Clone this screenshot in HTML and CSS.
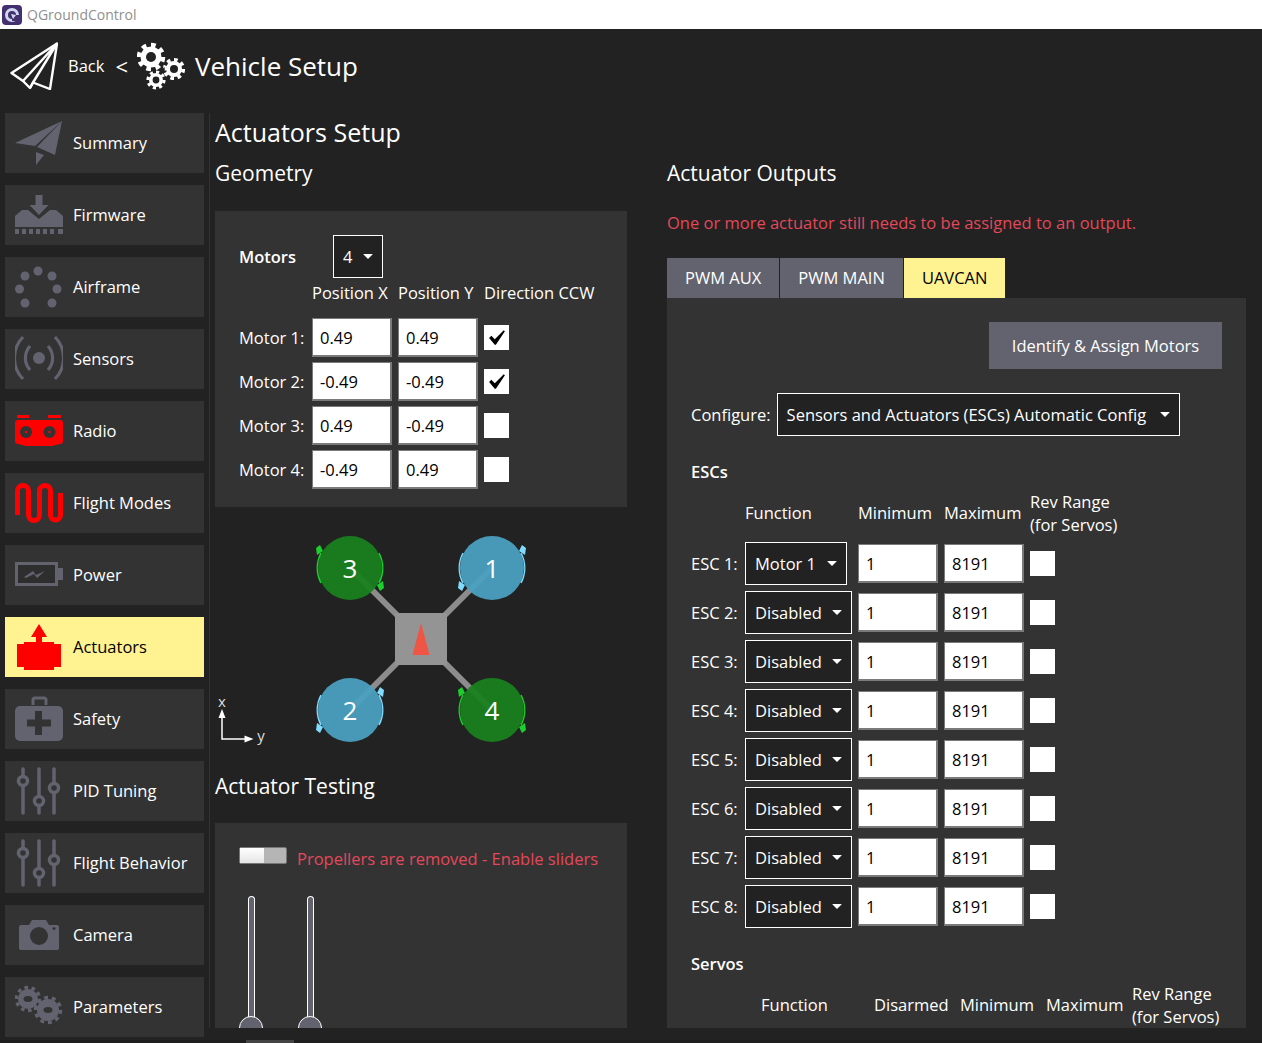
FILE: index.html
```html
<!DOCTYPE html>
<html>
<head>
<meta charset="utf-8">
<title>QGroundControl</title>
<link rel="stylesheet" href="styles.css">
</head>
<body>
<div class="titlebar">
  <svg class="app-logo" viewBox="0 0 20 20"><rect width="20" height="20" rx="4" fill="#43306f"/><circle cx="10" cy="10" r="5.5" fill="none" stroke="#cfd8ee" stroke-width="3"/><path d="M10 10h7v6h-7z" fill="#43306f"/><path d="M9 9l5 1-3 4z" fill="#cfd8ee"/></svg>
  <span>QGroundControl</span>
</div>

<div class="header">
  <svg class="back-plane" viewBox="0 0 48 48" fill="none" stroke="#fff" stroke-width="2.4" stroke-linejoin="round"><path d="M47 1.5L1.5 31 13 39l7 7 3-5.5L40 47z"/><path d="M47 1.5L13 39M47 1.5L23 40.5M20 46l3-5.5"/></svg>
  <span class="back-label">Back</span>
  <span class="back-arrow">&lt;</span>
  <svg class="header-gears" viewBox="0 0 48 48">
    <circle cx="14" cy="15" r="10.5" fill="#fff"/><circle cx="14" cy="15" r="12" fill="none" stroke="#fff" stroke-width="4.5" pathLength="16" stroke-dasharray="1 1"/><circle cx="14" cy="15" r="5" fill="#222"/>
    <circle cx="37" cy="27" r="8" fill="#fff"/><circle cx="37" cy="27" r="9.3" fill="none" stroke="#fff" stroke-width="3.6" pathLength="16" stroke-dasharray="1 1"/><circle cx="37" cy="27" r="4" fill="#222"/>
    <circle cx="19" cy="38" r="7" fill="#fff"/><circle cx="19" cy="38" r="8" fill="none" stroke="#fff" stroke-width="3.2" pathLength="16" stroke-dasharray="1 1"/><circle cx="19" cy="38" r="3.4" fill="#222"/>
  </svg>
  <span class="header-title">Vehicle Setup</span>
</div>

<div class="main">
  <div class="sidebar">
    <div class="navbtn">
      <svg class="navicon" viewBox="0 0 48 48" fill="#636370"><path d="M47 2L0 24l20 3z"/><path d="M47 2L22 28l18 8z"/><path d="M21 33v13l8-10z"/></svg>
      Summary
    </div>
    <div class="navbtn">
      <svg class="navicon" viewBox="0 0 48 48" fill="#636370"><path d="M0 25l7-6h6l11 9 11-9h6l7 6v11H0z"/><path d="M20.500 4h7v10h6L24 24l-9.500-10h6z"/><path d="M0 38h4v5H0zM7 38h4v5H7zM14 38h4v5h-4zM21 38h4v5h-4zM28 38h4v5h-4zM35 38h4v5h-4zM43 38h5v5h-5z"/></svg>
      Firmware
    </div>
    <div class="navbtn">
      <svg class="navicon" viewBox="0 0 48 48" fill="#636370"><circle cx="23" cy="8" r="4.500"/><circle cx="37" cy="13" r="4.500"/><circle cx="42" cy="26" r="4.500"/><circle cx="37" cy="40" r="4.500"/><circle cx="10" cy="40" r="4.500"/><circle cx="4.500" cy="26" r="4.500"/><circle cx="10" cy="13" r="4.500"/></svg>
      Airframe
    </div>
    <div class="navbtn">
      <svg class="navicon" viewBox="0 0 48 48" fill="none" stroke="#636370" stroke-width="3.200"><circle cx="24" cy="23" r="6" fill="#636370" stroke="none"/><path d="M15 11a18 18 0 0 0 0 24M33 11a18 18 0 0 1 0 24M8 2a30 30 0 0 0 0 42M40 2a30 30 0 0 1 0 42"/></svg>
      Sensors
    </div>
    <div class="navbtn">
      <svg class="navicon" viewBox="0 0 48 48" fill="#f00"><path d="M2 8h12v3H2zM33 8h13v3H33z"/><path d="M3 13h42q3 0 3 3v18q0 3-3 3l-8 2H11l-8-2q-3 0-3-3V16q0-3 3-3z"/><circle cx="11" cy="25" r="6" fill="#333"/><circle cx="34.500" cy="25" r="6" fill="#333"/><circle cx="11" cy="25" r="1.200"/><circle cx="34.500" cy="25" r="1.200"/></svg>
      Radio
    </div>
    <div class="navbtn">
      <svg class="navicon" viewBox="0 0 48 48" fill="none" stroke="#f00" stroke-width="5"><path d="M2.500 36V12a5.500 5.500 0 0 1 11 0v24a5.500 5.500 0 0 0 11 0V12a5.500 5.500 0 0 1 11 0v24a5 5 0 0 0 10 0V14"/></svg>
      Flight Modes
    </div>
    <div class="navbtn">
      <svg class="navicon" viewBox="0 0 48 48" fill="#636370"><rect x="1.500" y="12.500" width="40" height="21" fill="#2e2e2e" stroke="#636370" stroke-width="3"/><path d="M43 17h5v12h-5z"/><path d="M9 26l9-6 3 4 9-4-8 7-3-4-8 4z"/></svg>
      Power
    </div>
    <div class="navbtn navbtn-active">
      <svg class="navicon" viewBox="0 0 48 48" fill="#f00"><path d="M24 1l8 13h-5v5h12v2h7v23h-7v3H9v-3H2V21h7v-2h12v-5h-5z"/></svg>
      Actuators
    </div>
    <div class="navbtn">
      <svg class="navicon" viewBox="0 0 48 48" fill="#636370"><path d="M18 10V5q0-2 2-2h9q2 0 2 2v5" fill="none" stroke="#636370" stroke-width="3"/><rect y="11" width="48" height="35" rx="5"/><path d="M20 16h7v8.500h9v7h-9V40h-7v-8.500h-8v-7h8z" fill="#333"/></svg>
      Safety
    </div>
    <div class="navbtn">
      <svg class="navicon" viewBox="0 0 48 48" fill="#333" stroke="#636370" stroke-width="3.500" stroke-linecap="round"><path d="M8 2v44M24 2v44M39 2v44"/><circle cx="8" cy="14" r="4.500"/><circle cx="24" cy="34" r="4.500"/><circle cx="39" cy="21" r="4.500"/></svg>
      PID Tuning
    </div>
    <div class="navbtn">
      <svg class="navicon" viewBox="0 0 48 48" fill="#333" stroke="#636370" stroke-width="3.500" stroke-linecap="round"><path d="M8 2v44M24 2v44M39 2v44"/><circle cx="8" cy="14" r="4.500"/><circle cx="24" cy="34" r="4.500"/><circle cx="39" cy="21" r="4.500"/></svg>
      Flight Behavior
    </div>
    <div class="navbtn">
      <svg class="navicon" viewBox="0 0 48 48" fill="#636370"><path d="M6 14h8l3-5h14l3 5h8q2 0 2 2v21q0 2-2 2H6q-2 0-2-2V16q0-2 2-2z"/><circle cx="24" cy="25" r="9" fill="#333"/><circle cx="39" cy="17.500" r="1.500" fill="#333"/></svg>
      Camera
    </div>
    <div class="navbtn">
      <svg class="navicon" viewBox="0 0 48 48" fill="#636370">
        <circle cx="13" cy="16" r="10"/><circle cx="13" cy="16" r="11.500" fill="none" stroke="#636370" stroke-width="3.500" pathLength="20" stroke-dasharray="1 1"/><ellipse cx="13" cy="16" rx="4.500" ry="3" fill="#333"/>
        <circle cx="33" cy="27" r="11"/><circle cx="33" cy="27" r="12.500" fill="none" stroke="#636370" stroke-width="3.500" pathLength="20" stroke-dasharray="1 1"/><ellipse cx="33" cy="27" rx="4.500" ry="3" fill="#333"/>
      </svg>
      Parameters
    </div>
  </div>
  <div class="divider"></div>

  <div class="content">
    <div class="page-title">Actuators Setup</div>
    <div class="columns">
      <div class="col-left">
        <div class="section-title">Geometry</div>
        <div class="panel geometry">
          <div class="motors-row"><b>Motors</b><div class="combo combo-count">4<i class="caret"></i></div></div>
          <div class="motor-grid">
            <div></div><div class="motor-head">Position X</div><div class="motor-head">Position Y</div><div class="motor-head">Direction CCW</div>
            <div>Motor 1:</div><input class="field" value="0.49"><input class="field" value="0.49"><div class="check"><svg class="tick" viewBox="0 0 16 14"><path d="M1 7l2-2 3 3 8-8 1 1-8 12h-1z"/></svg></div>
            <div>Motor 2:</div><input class="field" value="-0.49"><input class="field" value="-0.49"><div class="check"><svg class="tick" viewBox="0 0 16 14"><path d="M1 7l2-2 3 3 8-8 1 1-8 12h-1z"/></svg></div>
            <div>Motor 3:</div><input class="field" value="0.49"><input class="field" value="-0.49"><div class="check"></div>
            <div>Motor 4:</div><input class="field" value="-0.49"><input class="field" value="0.49"><div class="check"></div>
          </div>
        </div>

        <svg class="diagram" viewBox="210 507 412 261">
          <path d="M345 568L487 710M487 568L345 710" stroke="#8c8c8c" stroke-width="6"/>
          <rect x="390" y="613" width="52" height="52" fill="#949494"/>
          <path d="M416 623l8.500 32h-17z" fill="#ee5544"/>
          <g class="rotor rotor-ccw" transform="translate(345 568)">
            <circle r="32"/><path class="arc" d="M-29-15A32 32 0 0 0-29 15M29-15A32 32 0 0 1 29 15"/><path class="head" d="M-30-23l3 6-6 4-1-7zM30 23l-3-6 6-4 1 7z"/>
            <text y="10">3</text>
          </g>
          <g class="rotor rotor-cw" transform="translate(487 568)">
            <circle r="32"/><path class="arc" d="M-29-15A32 32 0 0 0-29 15M29-15A32 32 0 0 1 29 15"/><path class="head" d="M-30 23l3-6-6-4-1 7zM30-23l-3 6 6 4 1-7z"/>
            <text y="10">1</text>
          </g>
          <g class="rotor rotor-cw" transform="translate(345 710)">
            <circle r="32"/><path class="arc" d="M-29-15A32 32 0 0 0-29 15M29-15A32 32 0 0 1 29 15"/><path class="head" d="M-30 23l3-6-6-4-1 7zM30-23l-3 6 6 4 1-7z"/>
            <text y="10">2</text>
          </g>
          <g class="rotor rotor-ccw" transform="translate(487 710)">
            <circle r="32"/><path class="arc" d="M-29-15A32 32 0 0 0-29 15M29-15A32 32 0 0 1 29 15"/><path class="head" d="M-30-23l3 6-6 4-1-7zM30 23l-3-6 6-4 1 7z"/>
            <text y="10">4</text>
          </g>
          <path d="M217 712v27h24" fill="none" stroke="#fff" stroke-width="1.500"/>
          <path d="M217 709l3.500 9h-7zM248.500 739l-9 3.500v-7z" fill="#fff"/>
          <text class="axis" x="217" y="707">x</text>
          <text class="axis" x="256" y="741">y</text>
        </svg>

        <div class="section-title">Actuator Testing</div>
        <div class="panel testing">
          <div class="enable-row">
            <div class="toggle"><span class="toggle-knob"></span></div>
            <span class="warn">Propellers are removed - Enable sliders</span>
          </div>
          <div class="sliders">
            <div class="slider"><div class="slider-track"></div><div class="slider-knob"></div></div>
            <div class="slider"><div class="slider-track"></div><div class="slider-knob"></div></div>
          </div>
        </div>
      </div>

      <div class="col-right">
        <div class="section-title">Actuator Outputs</div>
        <div class="warn warn-outputs">One or more actuator still needs to be assigned to an output.</div>
        <div class="tabs">
          <div class="tab">PWM AUX</div>
          <div class="tab">PWM MAIN</div>
          <div class="tab tab-active">UAVCAN</div>
        </div>
        <div class="panel outputs">
          <div class="identify-row"><div class="btn">Identify &amp; Assign Motors</div></div>
          <div class="configure-row">Configure:<div class="combo combo-config">Sensors and Actuators (ESCs) Automatic Config<i class="caret"></i></div></div>
          <div class="group-title">ESCs</div>
          <div class="esc-grid">
            <div></div><div>Function</div><div>Minimum</div><div>Maximum</div><div class="rev">Rev Range<br>(for Servos)</div>
            <div>ESC 1:</div><div class="combo combo-fn combo-motor">Motor 1<i class="caret"></i></div><input class="field" value="1"><input class="field" value="8191"><div class="check"></div>
            <div>ESC 2:</div><div class="combo combo-fn">Disabled<i class="caret"></i></div><input class="field" value="1"><input class="field" value="8191"><div class="check"></div>
            <div>ESC 3:</div><div class="combo combo-fn">Disabled<i class="caret"></i></div><input class="field" value="1"><input class="field" value="8191"><div class="check"></div>
            <div>ESC 4:</div><div class="combo combo-fn">Disabled<i class="caret"></i></div><input class="field" value="1"><input class="field" value="8191"><div class="check"></div>
            <div>ESC 5:</div><div class="combo combo-fn">Disabled<i class="caret"></i></div><input class="field" value="1"><input class="field" value="8191"><div class="check"></div>
            <div>ESC 6:</div><div class="combo combo-fn">Disabled<i class="caret"></i></div><input class="field" value="1"><input class="field" value="8191"><div class="check"></div>
            <div>ESC 7:</div><div class="combo combo-fn">Disabled<i class="caret"></i></div><input class="field" value="1"><input class="field" value="8191"><div class="check"></div>
            <div>ESC 8:</div><div class="combo combo-fn">Disabled<i class="caret"></i></div><input class="field" value="1"><input class="field" value="8191"><div class="check"></div>
          </div>
          <div class="group-title group-servos">Servos</div>
          <div class="servo-head">
            <div>Function</div><div>Disarmed</div><div>Minimum</div><div>Maximum</div><div class="rev">Rev Range<br>(for Servos)</div>
          </div>
        </div>
      </div>
    </div>
  </div>
</div>
<div class="scrollbar"><div class="scroll-thumb"></div></div>
</body>
</html>
```

FILE: styles.css
```css
* { margin:0; padding:0; box-sizing:border-box; }
html, body { height:100%; overflow:hidden; }
body { width:1262px; height:1043px; display:flex; flex-direction:column; background:#222222; color:#fff; font:16.5px/22px "Open Sans", "Noto Sans", sans-serif; }

.titlebar { height:29px; flex:none; background:#fff; color:#8f8f8f; display:flex; align-items:center; padding-left:2px; gap:5px; font-size:14px; }
.app-logo { width:20px; height:20px; }

.header { height:84px; flex:none; display:flex; align-items:center; padding-left:10px; padding-bottom:10px; }
.back-plane { width:48px; height:48px; }
.back-label { margin-left:10px; }
.back-arrow { margin-left:11px; font-size:22px; }
.header-gears { width:48px; height:48px; margin-left:9px; }
.header-title { margin-left:10px; font-size:26px; line-height:36px; }

.main { flex:1; display:flex; min-height:0; }
.sidebar { width:199px; margin-left:5px; flex:none; display:flex; flex-direction:column; gap:12px; }
.navbtn { height:60px; flex:none; background:#333333; display:flex; align-items:center; gap:10px; padding-left:10px; }
.navbtn-active { background:#fff291; color:#000; }
.navicon { width:48px; height:48px; flex:none; }
.divider { width:1px; height:915px; margin:0 5px; background:#333333; flex:none; }

.content { width:1031px; flex:none; }
.page-title { height:42px; padding-top:1px; font-size:25px; line-height:36px; }
.columns { display:flex; gap:40px; height:873px; }
.col-left { width:412px; flex:none; }
.col-right { width:579px; flex:none; }
.section-title { height:36px; font-size:21px; line-height:36px; }
.panel { background:#333333; }

.geometry { height:296px; margin-top:20px; padding:24px; }
.motors-row { display:flex; align-items:center; height:43px; }
.motors-row b { width:94px; font-weight:600; }
.motor-grid { display:grid; grid-template-columns:67px 80px 80px auto; grid-template-rows:35px repeat(4, 39px); column-gap:6px; row-gap:5px; align-items:center; margin-bottom:0; }
.motor-grid > .motor-head { white-space:nowrap; margin-bottom:0; align-self:center; }
.motor-grid > div:nth-child(-n+4) { margin-bottom:5px; }

.field { width:80px; height:39px; background:#fff; border:none; border-bottom:2px solid #7a7a7a; border-right:2px solid #7a7a7a; border-left:1px solid #7a7a7a; border-top:1px solid #7a7a7a; padding-left:7px; color:#000; font:16.5px "Open Sans", sans-serif; outline:none; }
.check { width:25px; height:25px; background:#fff; display:flex; align-items:center; justify-content:center; }
.tick { width:18px; height:16px; fill:#000; }

.combo { height:43px; background:#222222; border:1px solid #fff; color:#fff; display:flex; align-items:center; white-space:nowrap; padding-left:9px; }
.caret { width:0; height:0; border:5px solid transparent; border-top:5px solid #fff; border-bottom:none; margin-left:auto; margin-right:9px; border-radius:1px; }
.combo-count { width:50px; }
.combo-config { width:403px; margin-left:6px; }
.combo-fn { width:107px; }
.combo-motor { width:102px; }

.diagram { display:block; width:412px; height:261px; }
.rotor circle { opacity:0.95; }
.rotor text { fill:#fff; font-size:26px; text-anchor:middle; }
.rotor-ccw circle { fill:#19801f; }
.rotor-cw circle { fill:#4aa0c0; }
.arc { fill:none; stroke-width:1.5px; }
.rotor-ccw .arc { stroke:#1ccf2c; }
.rotor-cw .arc { stroke:#7fdcff; }
.rotor-ccw .head { fill:#1ccf2c; }
.rotor-cw .head { fill:#7fdcff; }
.axis { fill:#ddd; font-size:15px; text-anchor:middle; }

.testing { height:205px; margin-top:19px; padding:24px 0 0 24px; overflow:hidden; position:relative; }
.enable-row { display:flex; gap:10px; }
.toggle { width:48px; height:17px; background:#b5b5b5; border:1px solid #777; border-radius:2px; }
.toggle-knob { display:block; width:24px; height:15px; background:linear-gradient(#fff, #e4e4e4); }
.warn { color:#e4485a; }
.enable-row .warn { margin-top:1px; }
.warn-outputs { height:24px; line-height:24px; margin-top:20px; }
.sliders { display:flex; gap:35px; margin-top:26px; }
.slider { width:24px; display:flex; flex-direction:column; align-items:center; }
.slider-track { width:7px; height:122px; background:#636370; border:1px solid #fff; border-bottom:none; border-radius:4px 4px 0 0; }
.slider-knob { width:24px; height:24px; margin-top:-2px; background:#636370; border:1px solid #fff; border-radius:50%; flex:none; }

.tabs { display:flex; gap:1px; height:40px; margin-top:23px; }
.tab { background:#636370; padding:0 18px; display:flex; align-items:center; }
.tab-active { background:#fff291; color:#000; }

.outputs { height:730px; padding:24px 24px 0; overflow:hidden; }
.identify-row { display:flex; justify-content:flex-end; }
.btn { width:233px; height:47px; background:#636370; display:flex; align-items:center; justify-content:center; }
.configure-row { display:flex; align-items:center; margin-top:24px; }
.group-title { height:24px; line-height:24px; margin-top:24px; font-weight:600; }
.esc-grid { display:grid; grid-template-columns:48px 107px 80px 80px auto; grid-template-rows:46px repeat(8, 43px); gap:6px; align-items:center; margin-top:6px; white-space:nowrap; }
.esc-grid .field { height:39px; }
.servo-head { display:grid; grid-template-columns:113px 86px 86px 86px auto; height:46px; align-items:center; margin:6px 0 0 70px; white-space:nowrap; }
.rev { line-height:23px; }

.scrollbar { height:3px; flex:none; background:#1e1e1e; padding-left:246px; }
.scroll-thumb { width:48px; height:3px; background:#444; }
```
